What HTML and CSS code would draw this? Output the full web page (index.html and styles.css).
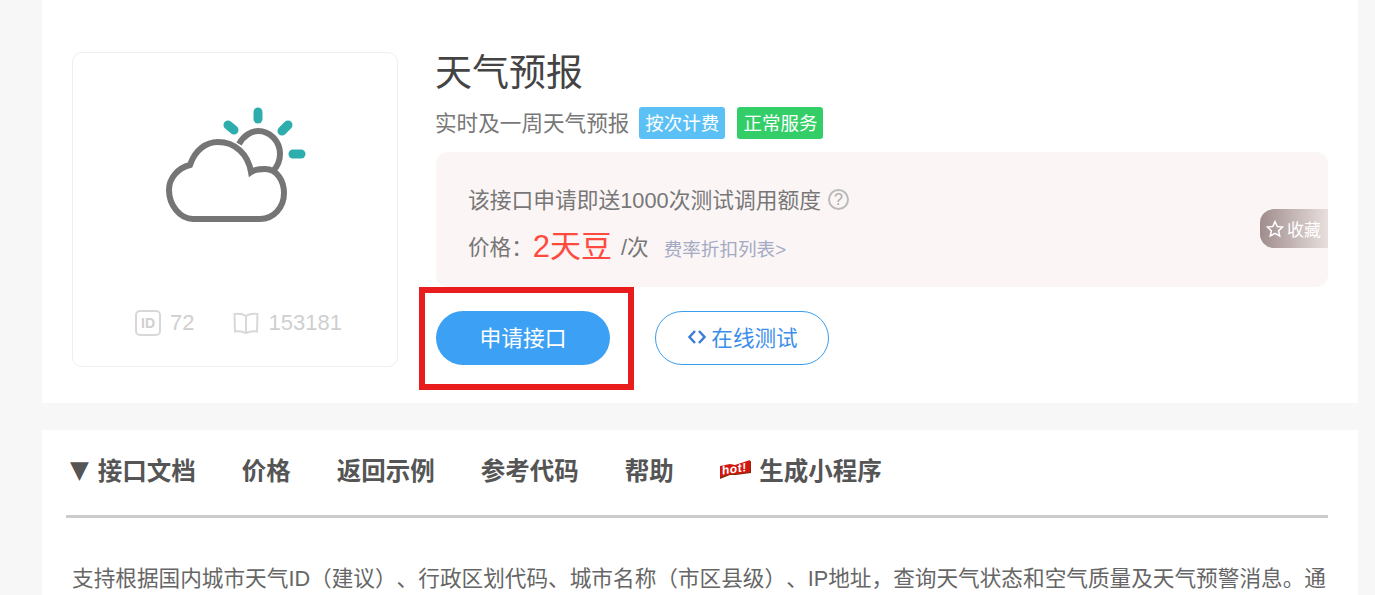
FILE: index.html
```html
<!DOCTYPE html>
<html lang="zh-CN">
<head>
    <meta charset="UTF-8">
    <meta name="viewport" content="width=device-width, initial-scale=1.0">
    <title>天气预报</title>
    <link rel="stylesheet" href="styles.css">
</head>
<body>
    <div class="panel api-panel">
        <div class="api-card">
            <svg class="api-logo" viewBox="0 0 170 140" width="170" height="140">
                <g fill="none" stroke="#757575" stroke-width="6">
                    <path d="M43 124 C30 124 19 110 19 95 C19 83 28 73 40 70 C45 55 56 47 68 47 C85 47 98 59 101 77 C105 74 110 74 115 74 C127 74 134 86 134 98 C134 112 124 124 110 124 Z"/>
                    <path d="M89 49 C94 40 102 36 108 36 C120 36 130 46 130 59 C130 66 127 72 123 76"/>
                </g>
                <g fill="none" stroke="#2eadad" stroke-width="9" stroke-linecap="round">
                    <path d="M108 17 V24"/>
                    <path d="M78 30 L84 35"/>
                    <path d="M132 36 L138 30"/>
                    <path d="M143 59 H151"/>
                </g>
            </svg>
            <div class="api-stats">
                <span class="stat">
                    <span class="id-icon">ID</span>72
                </span>
                <span class="stat">
                    <svg class="book-icon" viewBox="0 0 26 22" width="26" height="22">
                        <path d="M13 4 C10 2 5 1.500 1.500 2 L2 19.500 C6 19 10 19.500 13 21 C16 19.500 20 19 24 19.500 L24.500 2 C21 1.500 16 2 13 4 Z M13 4 V21" fill="none" stroke="#d8d8d8" stroke-width="2"/>
                    </svg>153181
                </span>
            </div>
        </div>
        <div class="api-info">
            <h1>天气预报</h1>
            <div class="subtitle">
                <span class="subtitle-text">实时及一周天气预报</span>
                <span class="badge badge-blue">按次计费</span>
                <span class="badge badge-green">正常服务</span>
            </div>
            <div class="price-box">
                <div class="free-line">
                    该接口申请即送1000次测试调用额度
                    <span class="help-icon">?</span>
                </div>
                <div class="price-line">
                    <span>价格：</span><span class="price">2天豆</span><span class="per">/次</span><a class="rate-link" href="#">费率折扣列表&gt;</a>
                </div>
                <div class="favorite">
                    <svg viewBox="0 0 20 20" width="18" height="18">
                        <path d="M10 1.800 L12.500 7.200 L18.400 7.900 L14 11.900 L15.200 17.700 L10 14.800 L4.800 17.700 L6 11.900 L1.600 7.900 L7.500 7.200 Z" fill="none" stroke="#fff" stroke-width="1.700"/>
                    </svg>收藏
                </div>
            </div>
            <div class="actions">
                <a class="btn btn-primary" href="#">申请接口</a>
                <a class="btn btn-outline" href="#">
                    <svg viewBox="0 0 18 16" width="18" height="16">
                        <path d="M7 2 L1.500 8 L7 14 M11 2 L16.500 8 L11 14" fill="none" stroke="#3b7ed8" stroke-width="2.500"/>
                    </svg>在线测试
                </a>
                <div class="highlight"></div>
            </div>
        </div>
    </div>

    <div class="panel doc-panel">
        <div class="doc-tabs">
            <a href="#"><span class="tab-arrow">▼</span>接口文档</a>
            <a href="#">价格</a>
            <a href="#">返回示例</a>
            <a href="#">参考代码</a>
            <a href="#">帮助</a>
            <a href="#">
                <svg class="hot-icon" viewBox="0 0 31 19" width="31" height="19">
                    <path d="M0 7 L10 5 L15 6 L31 1 V13 L16 15 L10 15 L0 19 Z" fill="#8a2a08"/>
                    <path d="M0 6 L10 4 L15 5 L30 0 V12 L15 14 L10 14 L0 17 Z" fill="#d3170f"/>
                    <text class="hot-text" transform="translate(2 14.500) skewY(-8)">hot!</text>
                </svg>生成小程序
            </a>
        </div>
        <p class="doc-text">支持根据国内城市天气ID（建议）、行政区划代码、城市名称（市区县级）、IP地址，查询天气状态和空气质量及天气预警消息。通</p>
    </div>
</body>
</html>
```

FILE: styles.css
```css
html, body {
    height: 595px;
    overflow: hidden;
}
body {
    font-family: 'Liberation Sans', 'Noto Sans CJK SC', sans-serif;
    background-color: #F7F7F7;
    margin: 0;
    color: #666;
    text-spacing-trim: space-all;
}
a {
    text-decoration: none;
}
.panel {
    width: 1316px;
    margin-left: 42px;
    background-color: #FFFFFF;
    box-sizing: border-box;
}
.api-panel {
    height: 403px;
    padding: 52px 30px 0;
    display: flex;
    gap: 37px;
    margin-bottom: 27px;
}
.api-card {
    width: 326px;
    height: 315px;
    box-sizing: border-box;
    border: 1px solid #EEE;
    border-radius: 10px;
    display: flex;
    flex-direction: column;
    align-items: center;
}
.api-logo {
    margin-top: 42px;
}
.api-stats {
    display: flex;
    gap: 38px;
    margin-top: 74px;
    margin-left: 7px;
    color: #CFCFCF;
    font-size: 22px;
}
.stat {
    display: flex;
    align-items: center;
    height: 28px;
}
.id-icon {
    width: 26px;
    height: 26px;
    box-sizing: border-box;
    border: 2px solid #D8D8D8;
    border-radius: 5px;
    font-size: 14px;
    font-weight: bold;
    line-height: 22px;
    text-align: center;
    margin-right: 9px;
}
.book-icon {
    margin-right: 10px;
}
.api-info {
    flex: 1;
    min-width: 0;
}
.api-info h1 {
    margin: 2px 0 0;
    font-size: 37px;
    font-weight: normal;
    line-height: 40px;
    color: #444;
}
.subtitle {
    display: flex;
    align-items: center;
    margin-top: 13px;
    font-size: 21.6px;
    height: 32px;
    color: #777;
}
.subtitle-text {
    padding-bottom: 3px;
}
.badge {
    height: 32px;
    line-height: 33px;
    padding: 0 6px;
    margin-left: 10px;
    border-radius: 3px;
    color: #FFF;
    font-size: 18.5px;
}
.badge-blue {
    background-color: #5BC0F5;
}
.badge-green {
    background-color: #34CE68;
    margin-left: 12px;
}
.price-box {
    position: relative;
    height: 135px;
    box-sizing: border-box;
    margin: 13px 0 24px 1px;
    padding: 30px 32px 0;
    background-color: #FBF5F5;
    border-radius: 12px;
    font-size: 21.6px;
    color: #777;
}
.free-line {
    display: flex;
    align-items: center;
    gap: 7px;
    height: 32px;
    font-size: 21.750px;
}
.help-icon {
    width: 21px;
    height: 21px;
    box-sizing: border-box;
    border: 2px solid #BBB;
    border-radius: 50%;
    color: #AAA;
    font-size: 16px;
    line-height: 17px;
    text-align: center;
    margin-top: 2px;
}
.price-line {
    display: flex;
    align-items: center;
    height: 44px;
    margin-top: 9px;
}
.price {
    font-size: 31px;
    color: #FF4B3F;
    padding-bottom: 4px;
}
.per {
    margin-left: 9px;
}
.rate-link {
    margin-left: 15px;
    padding-top: 4px;
    font-size: 18.6px;
    color: #A3AAC4;
}
.favorite {
    position: absolute;
    right: 0;
    top: 57px;
    width: 68px;
    height: 39px;
    box-sizing: border-box;
    padding-left: 6px;
    display: flex;
    align-items: center;
    gap: 3px;
    border-radius: 14px 0 0 14px;
    background: linear-gradient(to right, #A08C8C, #E8E0DE);
    color: #FFF;
    font-size: 17px;
}
.actions {
    position: relative;
    display: flex;
    gap: 45px;
    margin-left: 1px;
}
.btn {
    width: 174px;
    height: 54px;
    box-sizing: border-box;
    border-radius: 27px;
    font-size: 21.8px;
    padding-bottom: 3px;
    display: flex;
    align-items: center;
    justify-content: center;
}
.btn-primary {
    background-color: #3CA0F5;
    color: #FFF;
}
.btn-outline {
    border: 1px solid #3B9EED;
    color: #3B8EEA;
    gap: 5px;
    font-size: 21.6px;
    padding-left: 2px;
}
.highlight {
    position: absolute;
    left: -17px;
    top: -24px;
    width: 215px;
    height: 103px;
    box-sizing: border-box;
    border: 6px solid #E81C1C;
}
.doc-panel {
    padding: 0 30px 0 24px;
    height: 165px;
}
.doc-tabs {
    display: flex;
    gap: 46px;
    height: 85px;
    padding-left: 4px;
    border-bottom: 3px solid #CCC;
    align-items: center;
}
.doc-tabs a {
    display: flex;
    align-items: center;
    color: #555;
    font-size: 24.500px;
    font-weight: bold;
    padding-bottom: 6px;
}
.tab-arrow {
    font-family: 'DejaVu Sans', sans-serif;
    font-weight: normal;
    margin-right: 9px;
}
.hot-icon {
    margin-right: 8.500px;
}
.hot-text {
    fill: #FFF;
    font-size: 12px;
    font-weight: bold;
    letter-spacing: 0.5px;
}
.doc-text {
    margin: 45px 0 0 6px;
    font-size: 21.650px;
    line-height: 32px;
    color: #666;
    white-space: nowrap;
}
```
